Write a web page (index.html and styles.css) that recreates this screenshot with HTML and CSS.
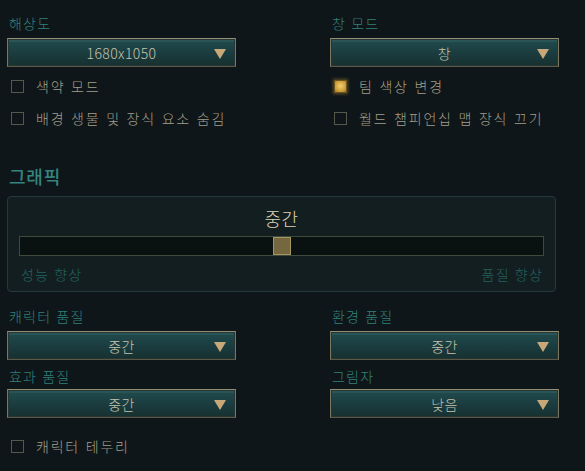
FILE: index.html
```html
<!DOCTYPE html>
<html lang="ko">
<head>
<meta charset="utf-8">
<link rel="stylesheet" href="styles.css">
</head>
<body>
<div class="page">
  <div class="grid top">
    <div class="col">
      <div class="label">해상도</div>
      <div class="select"><span>1680x1050</span><i class="arrow"></i></div>
      <div class="checks">
        <div class="check"><span class="box"></span><span class="ctext">색약 모드</span></div>
        <div class="check"><span class="box"></span><span class="ctext">배경 생물 및 장식 요소 숨김</span></div>
      </div>
    </div>
    <div class="col">
      <div class="label">창 모드</div>
      <div class="select"><span>창</span><i class="arrow"></i></div>
      <div class="checks">
        <div class="check"><span class="box on"></span><span class="ctext">팀 색상 변경</span></div>
        <div class="check"><span class="box"></span><span class="ctext">월드 챔피언십 맵 장식 끄기</span></div>
      </div>
    </div>
  </div>

  <div class="heading">그래픽</div>
  <div class="panel">
    <div class="level">중간</div>
    <div class="track"><span class="thumb"></span></div>
    <div class="ends"><span>성능 향상</span><span>품질 향상</span></div>
  </div>

  <div class="grid bottom">
    <div class="col">
      <div class="label">캐릭터 품질</div>
      <div class="select"><span>중간</span><i class="arrow"></i></div>
      <div class="label second">효과 품질</div>
      <div class="select"><span>중간</span><i class="arrow"></i></div>
    </div>
    <div class="col">
      <div class="label">환경 품질</div>
      <div class="select"><span>중간</span><i class="arrow"></i></div>
      <div class="label second">그림자</div>
      <div class="select"><span>낮음</span><i class="arrow"></i></div>
    </div>
  </div>
  <div class="check last"><span class="box"></span><span class="ctext">캐릭터 테두리</span></div>
</div>
</body>
</html>
```

FILE: styles.css
```css
html, body {
  margin: 0;
  padding: 0;
  background: #0f1619;
  width: 585px;
  height: 471px;
  overflow: hidden;
}
body {
  font-family: "Noto Sans CJK KR", "Noto Sans", sans-serif;
  font-weight: 300;
}
.page {
  padding: 13px 0 0 7px;
}
.grid {
  display: grid;
  grid-template-columns: 229px 229px;
  column-gap: 94px;
}
.label {
  color: #2f807a;
  font-size: 14px;
  line-height: 20px;
  height: 20px;
  letter-spacing: 1.2px;
  padding-left: 2px;
  margin-bottom: 5px;
}
.label.second {
  margin-top: 6px;
  margin-bottom: 3px;
}
.select {
  position: relative;
  height: 29px;
  box-sizing: border-box;
  border: 1px solid;
  border-color: #938f72 #7a7660 #5c5845 #7a7660;
  box-shadow: inset 0 0 0 1px #263634, inset 0 2px 0 1px #2a5556;
  background: linear-gradient(#214c4e, #1a3a3d 60%, #17302f);
  display: flex;
  align-items: center;
  justify-content: center;
  color: #c6c3ae;
  font-size: 14px;
  letter-spacing: 0.4px;
}
.select span {
  line-height: 20px;
}
.arrow {
  position: absolute;
  right: 9px;
  top: 10px;
  width: 0;
  height: 0;
  border-left: 6px solid transparent;
  border-right: 6px solid transparent;
  border-top: 10px solid #c8a878;
}
.checks {
  margin-top: 3px;
}
.check {
  display: flex;
  align-items: center;
  height: 32px;
  padding-left: 4px;
}
.box {
  width: 13px;
  height: 13px;
  box-sizing: border-box;
  border: 1px solid #55584c;
  flex: none;
}
.box.on {
  border: 1px solid #6b5420;
  background: radial-gradient(circle at 50% 45%, #f2d070, #c99a35 70%, #8a6a22);
  box-shadow: 0 0 3px 1px rgba(180, 140, 50, 0.45);
}
.ctext {
  margin-left: 12px;
  color: #a29e89;
  font-size: 14px;
  letter-spacing: 1.8px;
  line-height: 20px;
}
.heading {
  margin-top: 30px;
  color: #348580;
  font-size: 18px;
  font-weight: 500;
  line-height: 24px;
  letter-spacing: 0.8px;
  padding-left: 2px;
}
.panel {
  margin-top: 8px;
  width: 549px;
  box-sizing: border-box;
  border: 1px solid #26393a;
  border-radius: 4px;
  background: #131e21;
  padding: 10px 11px 8px;
}
.level {
  text-align: center;
  color: #ddd3b4;
  font-size: 18px;
  line-height: 22px;
  letter-spacing: 0.5px;
}
.track {
  position: relative;
  margin-top: 7px;
  height: 20px;
  box-sizing: border-box;
  border: 1px solid #3e4a3c;
  background: #0a1211;
}
.thumb {
  position: absolute;
  left: 50%;
  top: 0;
  width: 18px;
  height: 18px;
  margin-left: -9px;
  box-sizing: border-box;
  border: 1px solid #a49660;
  background: #75673f;
}
.ends {
  display: flex;
  justify-content: space-between;
  margin-top: 9px;
  padding: 0 1px 0 2px;
  color: #22625e;
  font-size: 14px;
  line-height: 18px;
  letter-spacing: 1.2px;
}
.bottom {
  margin-top: 14px;
}
.check.last {
  margin-top: 12px;
  height: 32px;
}
```
